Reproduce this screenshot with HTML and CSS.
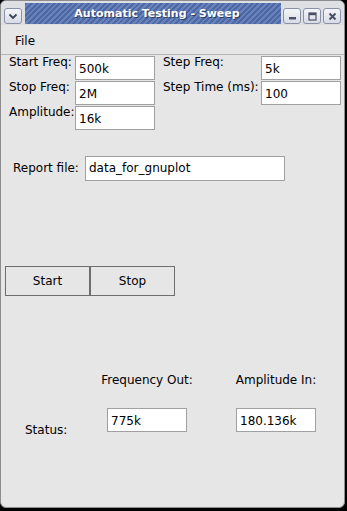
FILE: index.html
```html
<!DOCTYPE html>
<html lang="en">
<head>
    <meta charset="UTF-8">
    <title>Automatic Testing - Sweep</title>
    <link rel="stylesheet" href="styles.css">
</head>
<body>
    <div class="window">
        <div class="titlebar">
            <span class="tb-btn tb-menu">
                <svg width="10" height="7" viewBox="0 0 10 7"><path d="M1.5 1.5 L5 5 L8.5 1.5" fill="none" stroke="#3a4256" stroke-width="1.8"/></svg>
            </span>
            <div class="title">Automatic Testing - Sweep</div>
            <div class="tb-group">
                <span class="tb-btn"><svg width="9" height="9" viewBox="0 0 9 9"><rect x="1" y="5" width="7" height="2.5" fill="#4a5066"/></svg></span>
                <span class="tb-btn"><svg width="9" height="9" viewBox="0 0 9 9"><rect x="1" y="1" width="7" height="7" fill="none" stroke="#4a5066" stroke-width="1.2"/><rect x="1" y="1" width="7" height="2.2" fill="#4a5066"/></svg></span>
                <span class="tb-btn"><svg width="9" height="9" viewBox="0 0 9 9"><path d="M1.5 1.5 L7.5 7.5 M7.5 1.5 L1.5 7.5" stroke="#4a5066" stroke-width="2"/></svg></span>
            </div>
        </div>

        <div class="menubar"><span>File</span></div>

        <div class="params">
            <span class="label">Start Freq:</span>
            <div class="field">500k</div>
            <span class="label label-right">Step Freq:</span>
            <div class="field">5k</div>

            <span class="label">Stop Freq:</span>
            <div class="field">2M</div>
            <span class="label label-right">Step Time (ms):</span>
            <div class="field">100</div>

            <span class="label">Amplitude:</span>
            <div class="field">16k</div>
        </div>

        <div class="report">
            <span class="report-label">Report file:</span>
            <div class="field field-wide">data_for_gnuplot</div>
        </div>

        <div class="actions">
            <button class="button">Start</button>
            <button class="button">Stop</button>
        </div>

        <div class="status">
            <span class="status-label">Status:</span>
            <div class="readout">
                <span>Frequency Out:</span>
                <div class="field">775k</div>
            </div>
            <div class="readout">
                <span>Amplitude In:</span>
                <div class="field">180.136k</div>
            </div>
        </div>
    </div>
</body>
</html>
```

FILE: styles.css
```css
html, body {
    margin: 0;
    padding: 0;
    background: #000;
}
body {
    width: 347px;
    height: 511px;
    overflow: hidden;
    font-family: "DejaVu Sans", sans-serif;
    font-size: 12px;
    line-height: 15px;
    color: #000;
}
.window {
    width: 343px;
    height: 506px;
    background: #e6e6e6;
    border: 1px solid #8c8c8c;
    border-radius: 6px;
    overflow: hidden;
}
.titlebar {
    height: 24px;
    display: flex;
    align-items: stretch;
    background: #dedfe3;
    box-sizing: border-box;
    padding: 2px 0 0 0;
}
.tb-btn {
    width: 16px;
    height: 14px;
    margin-top: 5px;
    border: 1px solid #8891a8;
    border-radius: 3px;
    background: linear-gradient(#f4f5f9, #d9dce6);
    display: flex;
    align-items: center;
    justify-content: center;
}
.tb-menu {
    margin-left: 3px;
    margin-right: 3px;
}
.title {
    flex: 1;
    height: 21px;
    margin-right: 2px;
    padding-left: 8px;
    background: repeating-linear-gradient(135deg, #4e68a3 0 2px, #6882bb 2px 4px);
    color: #fff;
    font-weight: bold;
    font-size: 11px;
    line-height: 21px;
    text-align: center;
    text-shadow: 1px 1px 0 #2c3d66;
}
.tb-group {
    display: flex;
    gap: 2px;
    padding-right: 3px;
}
.menubar {
    height: 29px;
    border-bottom: 1px solid #b4b4b4;
    padding-left: 14px;
    line-height: 33px;
    font-size: 12px;
}
.params {
    margin-top: 1px;
    padding-left: 8px;
    display: grid;
    grid-template-columns: 66px 80px 106px 80px;
    grid-auto-rows: 25px;
}
.label {
    margin-top: -1px;
}
.label-right {
    padding-left: 8px;
}
.field {
    box-sizing: border-box;
    width: 80px;
    height: 24px;
    background: #fff;
    border: 1px solid #a0a0a0;
    padding: 5px 0 0 3px;
    white-space: nowrap;
}
.report {
    margin-top: 25px;
    padding-left: 12px;
    display: flex;
    align-items: center;
}
.report-label {
    width: 72px;
}
.field-wide {
    width: 200px;
    height: 25px;
    padding-top: 4px;
}
.actions {
    margin-top: 85px;
    padding-left: 4px;
    display: flex;
}
.button {
    box-sizing: border-box;
    width: 85px;
    height: 30px;
    background: #e6e6e6;
    border: 1px solid #6e6e6e;
    font-family: "DejaVu Sans", sans-serif;
    font-size: 12px;
    color: #000;
    padding: 0;
    margin: 0;
}
.status {
    margin-top: 77px;
    display: flex;
}
.status-label {
    width: 106px;
    padding-left: 24px;
    padding-top: 50px;
    box-sizing: border-box;
}
.readout {
    width: 80px;
    display: flex;
    flex-direction: column;
    align-items: center;
    gap: 20px;
    white-space: nowrap;
}
.readout + .readout {
    margin-left: 49px;
}
```
